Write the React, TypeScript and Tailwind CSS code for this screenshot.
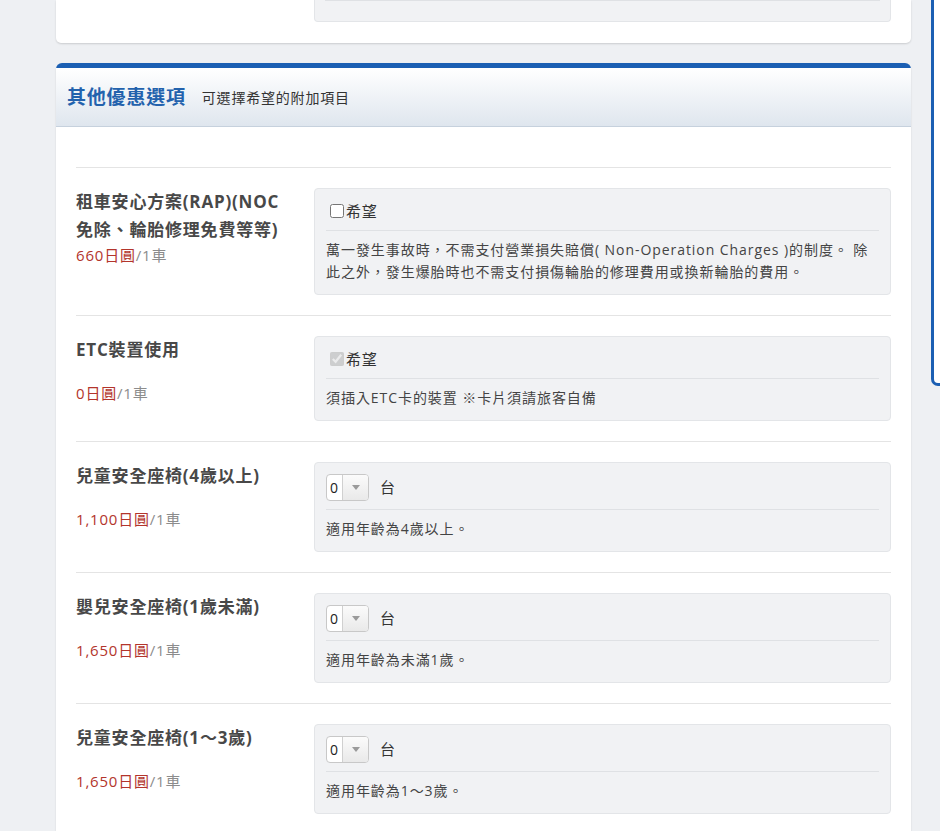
import type { ReactNode } from "react";

type Option = {
  label: ReactNode;
  price: string;
  kind: "check" | "checked" | "count";
  note: ReactNode;
};

const options: Option[] = [
  {
    label: (
      <>
        租車安心方案(RAP)(NOC
        <br />
        免除、輪胎修理免費等等)
      </>
    ),
    price: "660日圓",
    kind: "check",
    note: "萬一發生事故時，不需支付營業損失賠償( Non-Operation Charges )的制度。 除此之外，發生爆胎時也不需支付損傷輪胎的修理費用或換新輪胎的費用。",
  },
  {
    label: "ETC裝置使用",
    price: "0日圓",
    kind: "checked",
    note: "須插入ETC卡的裝置 ※卡片須請旅客自備",
  },
  {
    label: "兒童安全座椅(4歲以上)",
    price: "1,100日圓",
    kind: "count",
    note: "適用年齡為4歲以上。",
  },
  {
    label: "嬰兒安全座椅(1歲未滿)",
    price: "1,650日圓",
    kind: "count",
    note: "適用年齡為未滿1歲。",
  },
  {
    label: "兒童安全座椅(1～3歲)",
    price: "1,650日圓",
    kind: "count",
    note: "適用年齡為1～3歲。",
  },
];

function CountSelect() {
  return (
    <div className="flex items-center gap-[11px]">
      <div className="flex h-[27px] w-[43px] overflow-hidden rounded-[4px] border border-[#c8c8c8] bg-white">
        <span className="flex w-[15px] items-center pl-[3px] text-[14px] text-[#222]">0</span>
        <span className="flex flex-1 items-center justify-center border-l border-[#d0d0d0] bg-gradient-to-b from-[#fbfbfb] to-[#e9e9e9]">
          <svg width="8" height="5" viewBox="0 0 8 5">
            <path d="M0 0h8L4 5z" fill="#9a9a9a" />
          </svg>
        </span>
      </div>
      <span className="text-[15px] text-[#333]">台</span>
    </div>
  );
}

function WishCheck({ checked }: { checked: boolean }) {
  return (
    <label className="flex h-[22px] items-center text-[15px] text-[#333]">
      <input
        type="checkbox"
        readOnly
        checked={checked}
        disabled={checked}
        className="m-0 ml-[4px] mr-[2px] h-[14px] w-[14px]"
      />
      希望
    </label>
  );
}

function OptionRow({ option }: { option: Option }) {
  return (
    <div className="grid grid-cols-[238px_1fr] border-b border-[#e4e4e4] pb-[20px] pt-[20px]">
      <div className="pr-[20px]">
        <div className="min-h-[46px] text-[17px] font-bold leading-[28px] text-[#484848]">
          {option.label}
        </div>
        <div className="text-[15px] leading-[22px]">
          <span className="text-[#b3352c]">{option.price}</span>
          <span className="text-[#8c8c8c]">/1車</span>
        </div>
      </div>
      <div className="rounded-[4px] border border-[#e3e5e8] bg-[#f1f2f4] p-[11px]">
        <div className="border-b border-[#dfe1e4] pb-[8px]">
          {option.kind === "count" ? (
            <CountSelect />
          ) : (
            <WishCheck checked={option.kind === "checked"} />
          )}
        </div>
        <p className="pt-[8px] text-[14px] leading-[22px] tracking-[0.94px] text-[#444]">
          {option.note}
        </p>
      </div>
    </div>
  );
}

export default function App() {
  return (
    <div
      className="flex min-h-screen w-full overflow-hidden bg-[#eef0f3] pl-[56px] tracking-[0.05em]"
      style={{ fontFamily: '"Open Sans", "Noto Sans CJK TC", sans-serif' }}
    >
      <main className="w-[855px] shrink-0">
        <section className="h-[43px] rounded-b-[5px] bg-white px-[20px] shadow-[0_1px_2px_rgba(0,0,0,0.15)]">
          <div className="ml-[238px] h-[22px] rounded-b-[4px] border border-t-0 border-[#e3e5e8] bg-[#f1f2f4] px-[10px]">
            <div className="border-t border-[#dfe1e4]" />
          </div>
        </section>

        <section className="mt-[20px] rounded-t-[6px] border-t-[5px] border-[#1b5fb3] bg-white shadow-[0_1px_2px_rgba(0,0,0,0.12)]">
          <header className="flex h-[59px] items-center gap-[16px] border-b border-[#c6d1dd] bg-gradient-to-b from-white to-[#dfe6ee] px-[11px]">
            <h2 className="text-[19px] font-bold text-[#2362ad]">其他優惠選項</h2>
            <span className="text-[14px] text-[#333]">可選擇希望的附加項目</span>
          </header>
          <div className="px-[20px] pt-[40px]">
            <div className="border-t border-[#e4e4e4]">
              {options.map((option, i) => (
                <OptionRow key={i} option={option} />
              ))}
            </div>
          </div>
        </section>
      </main>

      <aside className="ml-[20px] h-[386px] w-[200px] shrink-0 rounded-bl-[7px] border-b-[3px] border-l-[3px] border-[#1b5fb3] bg-white" />
    </div>
  );
}
